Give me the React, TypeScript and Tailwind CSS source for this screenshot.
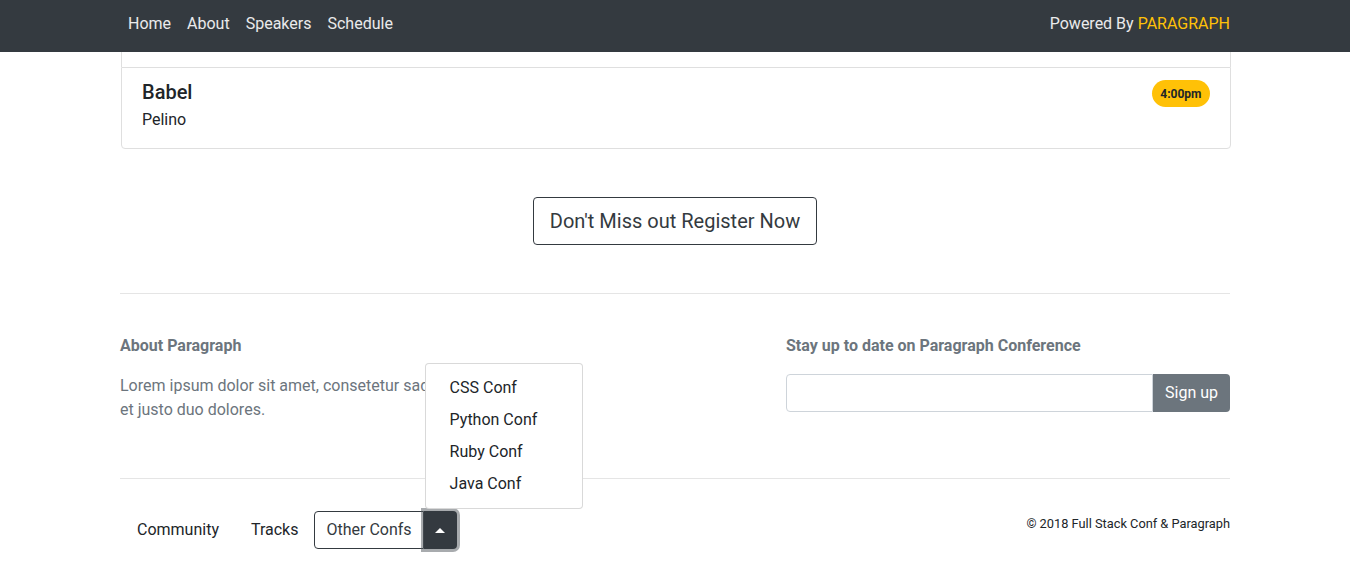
import { useState } from "react";

const navLinks = ["Home", "About", "Speakers", "Schedule"];

const otherConfs = ["CSS Conf", "Python Conf", "Ruby Conf", "Java Conf"];

const Navbar = () => {
  return (
    <div className="h-[52px] bg-[#343a40]">
      <div className="mx-auto w-[1110px] flex justify-between pt-[12px]">
        <div className="flex">
          {navLinks.map((l) => (
            <a key={l} className="px-2 leading-6 text-white/90">
              {l}
            </a>
          ))}
        </div>
        <div className="leading-6 text-white/90">
          Powered By <span className="text-[#ffc107]">PARAGRAPH</span>
        </div>
      </div>
    </div>
  );
};

const Session = () => {
  return (
    <div className="ml-px mr-[-1px]">
      {/* tail of the card above, under the navbar */}
      <div className="h-[15px] border-x border-[#dfdfdf]"></div>
      <div className="flex justify-between border border-[#dfdfdf] rounded-b-[4px] px-5 py-3">
        <div>
          <h5 className="text-[20px] leading-6 font-medium text-[#212529] mb-1">Babel</h5>
          <p className="leading-6 text-[#212529] mb-1">Pelino</p>
        </div>
        <div>
          <span className="inline-flex h-[27px] items-center rounded-full bg-[#ffc107] px-[8.5px] text-[12px] font-bold text-[#212529]">
            4:00pm
          </span>
        </div>
      </div>
    </div>
  );
};

const Footer = () => {
  let [open] = useState(true);

  return (
    <div>
      <hr className="border-t border-black/10" />

      <div className="flex pt-10">
        <div className="w-[555px] pr-[15px]">
          <h6 className="font-bold leading-6 text-[#6c757d]">About Paragraph</h6>
          <p className="mt-4 w-[445px] leading-6 text-[#6c757d]">
            Lorem ipsum dolor sit amet, consetetur sadipscing elitr, sed
            <br />
            et justo duo dolores.
          </p>
        </div>
        <div className="ml-[111px] w-[444px]">
          <h6 className="font-bold leading-6 text-[#6c757d]">
            Stay up to date on Paragraph Conference
          </h6>
          <div className="mt-[16px] flex h-[38px]">
            <input className="flex-1 rounded-l-[4px] border border-[#ced4da] px-3 outline-none" />
            <button className="rounded-r-[4px] bg-[#6c757d] px-3 text-white">Sign up</button>
          </div>
        </div>
      </div>

      <hr className="mt-[56px] border-t border-black/10" />

      <div className="flex justify-between items-start pt-[32px]">
        <div className="ml-px flex items-center">
          <a className="px-4 leading-6 text-[#212529]">Community</a>
          <a className="px-4 leading-6 text-[#212529]">Tracks</a>
          <div className="flex">
            <button className="h-[38px] rounded-l-[4px] border border-[#343a40] px-[11px] text-[#343a40]">
              Other Confs
            </button>
            <div className="relative">
              <button className="flex h-[38px] w-[33px] items-center justify-center rounded-r-[4px] bg-[#343a40] shadow-[0_0_0_3px_rgba(82,88,93,0.5)]">
                <span className="h-0 w-0 border-x-[5px] border-b-[5px] border-x-transparent border-b-white"></span>
              </button>
              {open && (
                <div className="absolute bottom-full left-[1px] mb-[2px] w-[158px] rounded-[4px] border border-black/15 bg-white py-2">
                  {otherConfs.map((c) => (
                    <div key={c} className="px-6 py-1 leading-6 text-[#212529] whitespace-nowrap">
                      {c}
                    </div>
                  ))}
                </div>
              )}
            </div>
          </div>
        </div>
        <div className="pt-[3px] text-[12.8px] leading-[19px] text-[#212529]">
          © 2018 Full Stack Conf &amp; Paragraph
        </div>
      </div>
    </div>
  );
};

export default function App() {
  return (
    <div className="h-[566px] overflow-hidden bg-white font-['Roboto',sans-serif]">
      <Navbar />
      <div className="mx-auto w-[1110px]">
        <Session />

        <div className="flex justify-center pt-[48px] pb-[48px]">
          <button className="rounded-[4px] border border-[#343a40] px-4 py-2 text-[20px] leading-[30px] text-[#343a40]">
            Don't Miss out Register Now
          </button>
        </div>

        <Footer />
      </div>
    </div>
  );
}
